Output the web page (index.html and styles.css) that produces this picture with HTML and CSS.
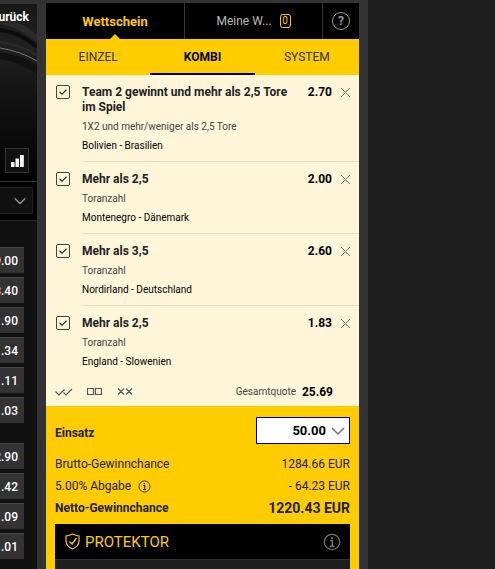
FILE: index.html
```html
<!DOCTYPE html>
<html lang="de">
<head>
<meta charset="utf-8">
<title>Wettschein</title>
<link rel="stylesheet" href="styles.css">
</head>
<body>
<svg class="sprite" aria-hidden="true">
  <symbol id="tick" viewBox="0 0 14 14"><path d="M3.500 6.800 6 9.200 10.500 4.800" fill="none" stroke="currentColor" stroke-width="1.300"/></symbol>
  <symbol id="cross" viewBox="0 0 11 11"><path d="M1 1 10 10M10 1 1 10" fill="none" stroke="currentColor"/></symbol>
  <symbol id="info" viewBox="0 0 18 18"><circle cx="9" cy="9" r="7.700" fill="none" stroke="currentColor" stroke-width="1.200"/><path d="M9 4v2M7.300 7.500H9.300V13M7 13.200h4.300" fill="none" stroke="currentColor" stroke-width="1.500"/></symbol>
  <symbol id="chevron" viewBox="0 0 14 8"><path d="M1 1 7 7 13 1" fill="none" stroke="currentColor" stroke-width="1.500"/></symbol>
</svg>
<div class="app">
  <main class="event">
    <header class="hero">
      <svg class="hero-art" viewBox="0 0 37 177" preserveAspectRatio="none" aria-hidden="true">
        <defs>
          <linearGradient id="shade" x1="0" y1="0" x2="0" y2="1">
            <stop offset="0" stop-color="#191919"/><stop offset=".25" stop-color="#202020"/>
            <stop offset=".5" stop-color="#141414"/><stop offset="1" stop-color="#020202"/>
          </linearGradient>
        </defs>
        <path fill="url(#shade)" d="M0 0h37v177H0z"/>
        <path d="M0 20Q20 24 37 38V31Q22 17 0 14z" fill="#2a2a2a"/>
        <path d="M0 26Q20 28 37 43" fill="none" stroke="#0c0c0c" stroke-width="4"/>
        <path d="M0 38Q20 41 37 51" fill="none" stroke="#282828" stroke-width="3"/>
        <path d="M0 44Q20 47 37 57" fill="none" stroke="#777"/>
        <path d="M0 48Q20 51 37 61V70Q20 58 0 55z" fill="#111"/>
      </svg>
      <a class="back" href="#">Zurück</a>
      <button class="stats" aria-label="Statistik"><svg viewBox="0 0 13 12" width="13" height="12"><path d="M0 7h3.500v5H0zM4.500 3.500H8V12H4.500zM9 0h3.800v12H9z" fill="#fff"/></svg></button>
    </header>
    <div class="filter"><button class="market" aria-label="Markt wählen"><svg width="12" height="8"><use href="#chevron"/></svg></button></div>
    <section class="odds">
      <div class="odds-group">
        <button>9.00</button><button>3.40</button><button>1.90</button><button>1.34</button><button>1.11</button><button>1.03</button>
      </div>
      <div class="odds-group">
        <button>2.90</button><button>1.42</button><button>1.09</button><button>1.01</button>
      </div>
    </section>
  </main>
  <aside class="slip">
    <nav class="tabs">
      <button class="tab active">Wettschein</button>
      <button class="tab">Meine W... <span class="count">0</span></button>
      <button class="help" aria-label="Hilfe"><span>?</span></button>
    </nav>
    <nav class="modes">
      <button>EINZEL</button>
      <button class="active">KOMBI</button>
      <button>SYSTEM</button>
    </nav>
    <div class="bets">
      <ul>
        <li>
          <span class="check"><input type="checkbox" id="b1" checked><svg><use href="#tick"/></svg></span>
          <div class="bet">
            <div class="pick"><label for="b1">Team 2 gewinnt und mehr als 2,5 Tore im Spiel</label><p class="market-name">1X2 und mehr/weniger als 2,5 Tore</p><p class="match">Bolivien - Brasilien</p></div>
            <strong>2.70</strong>
            <button class="remove" aria-label="Entfernen"><svg width="11" height="11"><use href="#cross"/></svg></button>
          </div>
        </li>
        <li>
          <span class="check"><input type="checkbox" id="b2" checked><svg><use href="#tick"/></svg></span>
          <div class="bet">
            <div class="pick"><label for="b2">Mehr als 2,5</label><p class="market-name">Toranzahl</p><p class="match">Montenegro - Dänemark</p></div>
            <strong>2.00</strong>
            <button class="remove" aria-label="Entfernen"><svg width="11" height="11"><use href="#cross"/></svg></button>
          </div>
        </li>
        <li>
          <span class="check"><input type="checkbox" id="b3" checked><svg><use href="#tick"/></svg></span>
          <div class="bet">
            <div class="pick"><label for="b3">Mehr als 3,5</label><p class="market-name">Toranzahl</p><p class="match">Nordirland - Deutschland</p></div>
            <strong>2.60</strong>
            <button class="remove" aria-label="Entfernen"><svg width="11" height="11"><use href="#cross"/></svg></button>
          </div>
        </li>
        <li>
          <span class="check"><input type="checkbox" id="b4" checked><svg><use href="#tick"/></svg></span>
          <div class="bet">
            <div class="pick"><label for="b4">Mehr als 2,5</label><p class="market-name">Toranzahl</p><p class="match">England - Slowenien</p></div>
            <strong>1.83</strong>
            <button class="remove" aria-label="Entfernen"><svg width="11" height="11"><use href="#cross"/></svg></button>
          </div>
        </li>
      </ul>
      <div class="summary">
        <div class="bulk">
          <button aria-label="Alle auswählen"><svg width="18" height="8" fill="none" stroke="#555" stroke-width="1.200"><path d="M.5 3.500 4 7 9.500 1.500M8.500 4.500 11 7 17 1"/></svg></button>
          <button aria-label="Alle abwählen"><svg width="16" height="8" fill="none" stroke="#555" stroke-width="1.200"><path d="M.5.5h6v6h-6zM8.500.5h6v6h-6z"/></svg></button>
          <button aria-label="Alle entfernen"><svg width="16" height="8" fill="none" stroke="#4e5a61" stroke-width="1.200"><path d="M1 .5l6 6M7 .5l-6 6M9 .5l6 6M15 .5l-6 6"/></svg></button>
        </div>
        <span class="total-label">Gesamtquote</span><strong>25.69</strong>
      </div>
    </div>
    <section class="stake">
      <div class="stake-row">
        <label for="amount">Einsatz</label>
        <div class="amount"><input id="amount" type="text" value="50.00"><button aria-label="Einsatz wählen"><svg width="14" height="8"><use href="#chevron"/></svg></button></div>
      </div>
      <dl>
        <div><dt>Brutto-Gewinnchance</dt><dd>1284.66 EUR</dd></div>
        <div><dt>5.00% Abgabe <svg width="13" height="13"><use href="#info"/></svg></dt><dd>- 64.23 EUR</dd></div>
        <div class="net"><dt>Netto-Gewinnchance</dt><dd>1220.43 EUR</dd></div>
      </dl>
      <div class="protector">
        <h2><svg width="15" height="17" viewBox="0 0 15 17" fill="none" stroke="currentColor"><path d="M7.500 1Q10.500 2.500 14 3v5q0 5-6.500 8Q1 13 1 8V3q3.500-.5 6.500-2z" stroke-width="1.200"/><path d="M4.500 8.500 7 11l4.500-6" stroke-width="1.400"/></svg>PROTEKTOR</h2>
        <button aria-label="Info"><svg width="18" height="18"><use href="#info"/></svg></button>
      </div>
      <div class="protector-body"></div>
    </section>
  </aside>
</div>
</body>
</html>
```
FILE: styles.css
```css
* { box-sizing: border-box; }
body {
  margin: 0;
  background: #1e1e1e;
  font-family: Roboto, "Liberation Sans", sans-serif;
  font-size: 12px;
  color: #222;
}
button { border: 0; padding: 0; background: none; font: inherit; color: inherit; }
svg { display: block; }
p, ul, dl, dd, h2 { margin: 0; padding: 0; }
ul { list-style: none; }
.sprite { position: absolute; width: 0; height: 0; }

.app {
  display: grid;
  grid-template-columns: 37px minmax(0, 331px) 1fr;
  height: 100vh;
  overflow: hidden;
}

/* Event column */
.event { background: #111; border-top: 4px solid #333; overflow: hidden; color: #fff; }
.hero {
  position: relative;
  display: flex;
  flex-direction: column;
  justify-content: space-between;
  align-items: flex-end;
  height: 177px;
  padding: 4px 8px;
}
.hero-art { position: absolute; inset: 0; width: 100%; height: 100%; }
.back { position: relative; color: #fff; font-weight: 700; line-height: 18px; text-decoration: none; }
.stats {
  position: relative;
  display: grid;
  place-items: center;
  width: 24px;
  height: 25px;
  margin-bottom: 4px;
  border: 1px solid #333;
  background: #111;
}
.filter {
  display: flex;
  justify-content: flex-end;
  padding: 5px 4px 6px;
  background: #000;
  border-top: 1px solid #333;
  border-bottom: 1px solid #222;
}
.market {
  display: flex;
  flex: none;
  align-items: center;
  justify-content: flex-end;
  width: 100px;
  height: 27px;
  padding-right: 6px;
  border: 1px solid #222;
  border-radius: 2px;
  background: #111;
  color: #999;
}
.odds { display: grid; gap: 20px; padding: 26px 13px 0 0; justify-content: end; }
.odds-group { display: grid; gap: 4px; }
.odds-group button {
  width: 100px;
  height: 26px;
  padding-right: 6px;
  border-top: 1px solid #484848;
  background: #333;
  font-weight: 500;
  text-align: right;
}

/* Bet slip */
.slip {
  display: flex;
  flex-direction: column;
  border: solid #333;
  border-width: 3px 9px 0;
  overflow: hidden;
}
.slip > * { flex: none; }
.tabs { display: grid; grid-template-columns: 1fr 1fr 37px; height: 36px; background: #000; color: #bbb; }
.tab { position: relative; display: flex; align-items: center; justify-content: center; gap: 8px; }
.tab + button, .help { border-left: 1px solid #333; }
.tab.active { color: #fc0; font-size: 13px; font-weight: 700; }
.tab.active::after {
  content: "";
  position: absolute;
  bottom: 0;
  left: 50%;
  margin-left: -5px;
  border: solid transparent;
  border-width: 0 5px 5px;
  border-bottom-color: #fc0;
}
.count {
  width: 11px;
  border: 1px solid #fc0;
  border-radius: 3px;
  color: #fc0;
  font-size: 10px;
  line-height: 12px;
}
.help { display: grid; place-items: center; color: #999; }
.help span {
  width: 18px;
  height: 18px;
  border: 1px solid #999;
  border-radius: 50%;
  font-weight: 700;
  line-height: 16px;
}
.modes { display: grid; grid-template-columns: repeat(3, 1fr); height: 36px; background: #fc0; color: #333; }
.modes .active { color: #000; font-weight: 700; box-shadow: inset 0 -2px #000; }

.bets { background: #fff6d9; }
.bets li { display: flex; gap: 12px; padding-left: 10px; }
.check { display: grid; flex: none; width: 14px; height: 14px; margin-top: 10px; }
.check > * { grid-area: 1 / 1; width: 14px; height: 14px; margin: 0; color: #333; pointer-events: none; }
.check input { appearance: none; border: 1px solid #444; border-radius: 2px; pointer-events: auto; }
.bet {
  display: flex;
  flex: 1;
  align-items: flex-start;
  gap: 8px;
  padding: 10px 8px 5px 0;
  border-bottom: 1px solid #e4dcc2;
  line-height: 15px;
}
.bets li:last-child .bet { border-bottom: 0; }
.pick { flex: 1; }
.pick label { display: block; margin-bottom: 3px; font-weight: 700; }
.market-name, .match { font-size: 10px; line-height: 18px; }
.market-name { color: #444; }
.match { line-height: 20px; color: #000; }
.bets strong { color: #000; font-weight: 700; }
.remove { padding: 2px 0; color: #777; }
.summary { display: flex; align-items: center; height: 29px; padding: 0 26px 0 9px; }
.bulk { display: flex; gap: 14px; margin-right: auto; }
.total-label { margin-right: 6px; color: #444; font-size: 10px; }

.stake { flex: 1 0 auto; display: flex; flex-direction: column; padding: 11px 9px 0; background: #fc0; }
.stake-row { display: flex; align-items: center; justify-content: space-between; margin-bottom: 9px; font-weight: 700; }
.stake-row label { padding-top: 4px; }
.amount {
  display: flex;
  align-items: center;
  width: 94px;
  height: 27px;
  padding-right: 4px;
  border: 1px solid #000;
  background: #fff;
}
.amount input {
  flex: 1;
  min-width: 0;
  padding: 0;
  border: 0;
  background: none;
  font: inherit;
  font-size: 13px;
  color: #000;
  text-align: right;
}
.amount button { margin-left: 5px; color: #777; }
dl div { display: flex; justify-content: space-between; line-height: 22px; }
dt { display: flex; align-items: center; gap: 7px; }
.net { font-weight: 700; }
.net dd { font-size: 14px; }
.protector {
  display: flex;
  align-items: center;
  justify-content: space-between;
  height: 35px;
  margin-top: 5px;
  padding: 0 9px 0 10px;
  background: #000;
}
.protector h2 { display: flex; align-items: center; gap: 5px; color: #fc0; font-size: 15px; font-weight: 400; }
.protector button { color: #777; }
.protector-body { flex: 1; min-height: 10px; border-top: 1px solid #333; background: #1e1e1e; }
```
